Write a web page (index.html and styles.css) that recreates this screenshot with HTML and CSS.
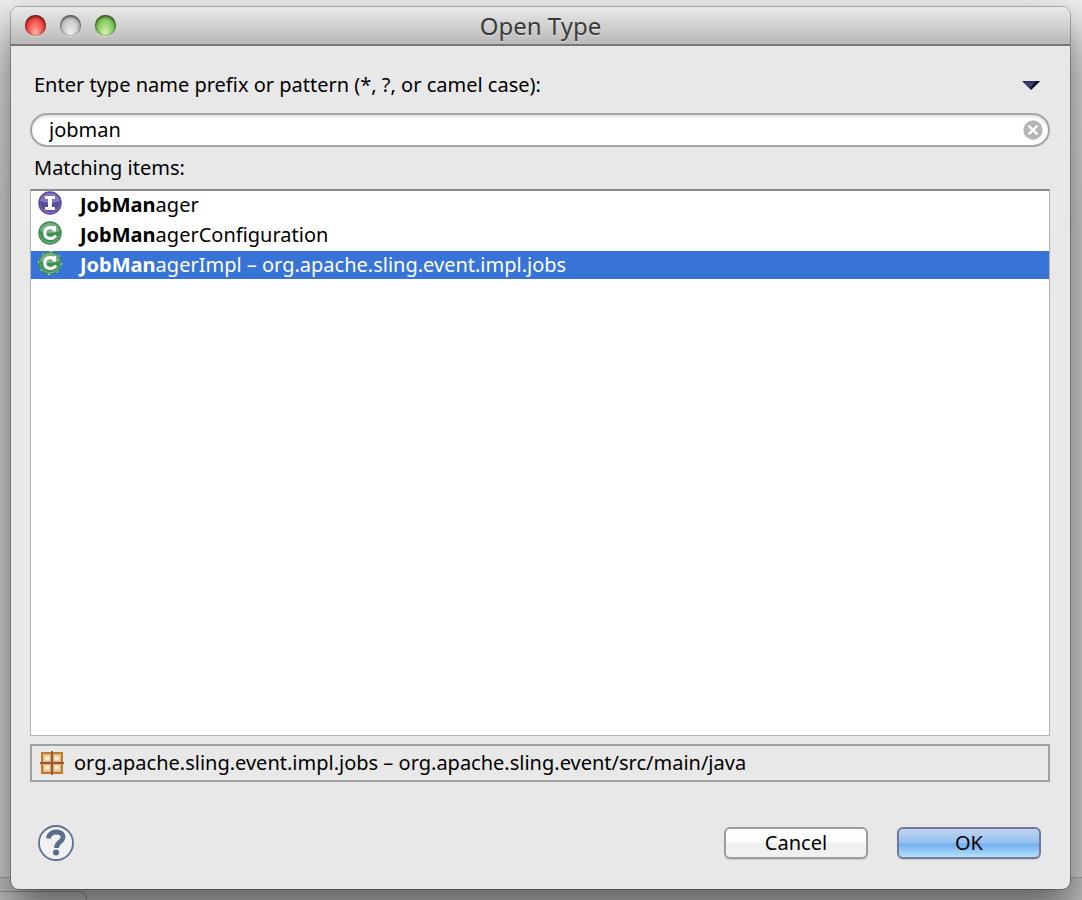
FILE: index.html
```html
<!DOCTYPE html>
<html lang="en">
<head>
    <meta charset="UTF-8">
    <meta name="viewport" content="width=device-width, initial-scale=1.0">
    <title>Open Type</title>
    <link rel="stylesheet" href="styles.css">
</head>
<body>
    <div class="backdrop"><div class="backdropTab"></div></div>

    <form class="window">
        <header class="titleBar">
            <div class="lights">
                <button type="button" class="light red" aria-label="Close"></button>
                <button type="button" class="light gray" aria-label="Minimize"></button>
                <button type="button" class="light green" aria-label="Zoom"></button>
            </div>
            <h1 class="title">Open Type</h1>
        </header>

        <main class="content">
            <div class="promptRow">
                <label for="pattern">Enter type name prefix or pattern (*, ?, or camel case):</label>
                <button type="button" class="menuButton" aria-label="View menu">
                    <svg width="18" height="9" viewBox="0 0 18 9">
                        <path d="M0 0H18L9 9Z" fill="#2b2a72"/>
                        <path d="M3 2H12L9 6Z" fill="#4a4560"/>
                        <path d="M14 0H18L9 9V6Z" fill="#15131c"/>
                    </svg>
                </button>
            </div>

            <div class="searchField">
                <input type="text" id="pattern" value="jobman">
                <button type="button" class="clearButton" aria-label="Clear">
                    <svg width="20" height="20" viewBox="0 0 20 20">
                        <circle cx="10" cy="10" r="9.7" fill="#b5b5b5"/>
                        <path d="M6.3 6.3L13.7 13.7M13.7 6.3L6.3 13.7" stroke="#fff" stroke-width="2.4" stroke-linecap="round"/>
                    </svg>
                </button>
            </div>

            <h2 class="listLabel" id="listLabel">Matching items:</h2>

            <ul class="list" role="listbox" aria-labelledby="listLabel">
                <li class="item" role="option" aria-selected="false">
                    <svg class="itemIcon" width="24" height="24" viewBox="0 0 24 24">
                        <circle cx="12" cy="12" r="11" fill="#8577bd" stroke="#5d4b9c" stroke-width="1.5"/>
                        <path d="M2 10Q12 14 22 10A10 10 0 0 1 2 12Z" fill="#5c4a9f"/>
                        <path d="M7 5H17V8H14V16H17V19H7V16H10V8H7Z" fill="#fff"/>
                    </svg>
                    <span><b>JobMan</b>ager</span>
                </li>
                <li class="item" role="option" aria-selected="false">
                    <svg class="itemIcon" width="24" height="24" viewBox="0 0 24 24">
                        <circle cx="12" cy="12" r="11" fill="#74b183" stroke="#3f8a58" stroke-width="1.5"/>
                        <path d="M2 10Q12 14 22 10A10 10 0 0 1 2 12Z" fill="#3d9050"/>
                        <path d="M17 9.500C16 5.500 6.800 5 6.800 12S15.500 18.500 18 14.500" fill="none" stroke="#fff" stroke-width="3.200"/>
                        <path d="M15.500 5H18V10.500H14.500Z" fill="#fff"/>
                    </svg>
                    <span><b>JobMan</b>agerConfiguration</span>
                </li>
                <li class="item selected" role="option" aria-selected="true">
                    <svg class="itemIcon" width="24" height="24" viewBox="0 0 24 24">
                        <circle cx="12" cy="12" r="11" fill="#74b183" stroke="#3f8a58" stroke-width="1.5"/>
                        <circle cx="12" cy="12" r="11.5" fill="none" stroke="#d5e6e0" stroke-width="1" stroke-dasharray="2 7"/>
                        <path d="M2 10Q12 14 22 10A10 10 0 0 1 2 12Z" fill="#3d9050"/>
                        <path d="M17 9.500C16 5.500 6.800 5 6.800 12S15.500 18.500 18 14.500" fill="none" stroke="#fff" stroke-width="3.200"/>
                        <path d="M15.500 5H18V10.500H14.500Z" fill="#fff"/>
                    </svg>
                    <span><b>JobMan</b>agerImpl – org.apache.sling.event.impl.jobs</span>
                </li>
            </ul>

            <div class="status">
                <svg width="24" height="24" viewBox="0 0 24 24">
                    <rect x="2" y="2" width="20" height="20" fill="#dfb078" stroke="#c47a30" stroke-width="2"/>
                    <path d="M4 4H10V10H4ZM14 4H20V10H14ZM4 14H10V20H4ZM14 14H20V20H14Z" fill="#f0d5a8"/>
                    <path d="M6 6H9V9H6ZM15 6H18V9H15ZM6 15H9V18H6ZM15 15H18V18H15Z" fill="#fbeecb"/>
                    <path d="M12 0V24M0 12H24" stroke="#96583c" stroke-width="2"/>
                </svg>
                <span>org.apache.sling.event.impl.jobs – org.apache.sling.event/src/main/java</span>
            </div>
        </main>

        <footer class="buttons">
            <button type="button" class="help" aria-label="Help">
                <svg width="38" height="38" viewBox="0 0 38 38">
                    <circle cx="19" cy="19" r="17" fill="#f0f0f0" stroke="#5f7290" stroke-width="1.800"/>
                    <path d="M11.500 14.500C12 6 26.500 6 26 13.500C25.500 18.500 19.500 17.500 19.500 24" fill="none" stroke="#5a6d8d" stroke-width="4.800"/>
                    <circle cx="19" cy="28.500" r="3" fill="#5a6d8d"/>
                </svg>
            </button>
            <button type="button" class="button">Cancel</button>
            <button type="submit" class="button primary">OK</button>
        </footer>
    </form>
</body>
</html>
```
FILE: styles.css
```css
* {
    box-sizing: border-box;
}

body {
    margin: 0;
    min-height: 100vh;
    padding: 7px 12px 11px 11px;
    display: flex;
    background: linear-gradient(#ededed, #d4d4d4 80px, #cacaca 240px);
    font-family: "Noto Sans", "Lucida Grande", sans-serif;
    font-size: 20px;
    line-height: 30px;
    color: #000;
    overflow: hidden;
}

button {
    padding: 0;
    border: 0;
    background: none;
    font: inherit;
    color: inherit;
}

svg {
    display: block;
}

/* edge of the window that lies behind the dialog */
.backdrop {
    position: absolute;
    left: 0;
    right: 0;
    bottom: 0;
    height: 23px;
    border-top: 1px solid #a0a0a0;
    background: #bcbcbc;
}

.backdropTab {
    position: absolute;
    left: 0;
    bottom: 0;
    width: 87px;
    height: 9px;
    border: 1px solid #8b8f99;
    border-width: 1px 1px 0 0;
    border-radius: 0 8px 0 0;
}

.window {
    position: relative;
    flex: 1;
    display: flex;
    flex-direction: column;
    background: #e8e8e8;
    border-radius: 8px;
    box-shadow: 0 0 0 1px rgba(0, 0, 0, 0.25), 0 20px 40px rgba(0, 0, 0, 0.5);
}

.titleBar {
    display: grid;
    grid-template-columns: 1fr auto 1fr;
    align-items: center;
    height: 39px;
    padding: 0 14px;
    border-bottom: 2px solid #757575;
    border-radius: 8px 8px 0 0;
    background: linear-gradient(#e9e9e9, #b9b9b9);
}

.lights {
    display: flex;
    gap: 14px;
}

.light {
    width: 21px;
    height: 21px;
    border-radius: 50%;
    box-shadow: inset 0 2px 3px rgba(0, 0, 0, 0.5), inset 0 0 2px rgba(0, 0, 0, 0.6), 0 1px 0 rgba(255, 255, 255, 0.5);
}

.red {
    background: radial-gradient(ellipse at 50% 90%, #ffb9ac, #f0403b 60%, #c9302d);
}

.gray {
    background: radial-gradient(ellipse at 50% 90%, #f2f2f2, #c4c4c4 60%, #a8a8a8);
}

.green {
    background: radial-gradient(ellipse at 50% 90%, #dcf7b4, #7cc557 60%, #4d9c36);
}

.title {
    margin: 0;
    font-size: 24px;
    font-weight: 400;
    color: #3a3a3a;
    text-shadow: 0 1px 0 rgba(255, 255, 255, 0.5);
}

.content {
    flex: 1;
    display: flex;
    flex-direction: column;
    padding: 24px 20px 0 19px;
}

.promptRow {
    display: flex;
    justify-content: space-between;
    align-items: center;
    padding: 0 10px 0 4px;
}

.searchField {
    display: flex;
    align-items: center;
    height: 34px;
    margin-top: 13px;
    padding: 0 5px 0 17px;
    border: 2px solid #a5a5a5;
    border-radius: 17px;
    background: #fff;
    box-shadow: inset 0 2px 2px rgba(0, 0, 0, 0.12);
}

.searchField input {
    flex: 1;
    min-width: 0;
    padding: 0;
    border: 0;
    outline: 0;
    background: none;
    font: inherit;
    color: inherit;
}

.listLabel {
    margin: 6px 4px;
    font-size: 20px;
    font-weight: 400;
}

.list {
    flex: 1;
    display: flex;
    flex-direction: column;
    gap: 2px;
    margin: 0;
    padding: 0;
    list-style: none;
    border: 1px solid #b4b4b4;
    border-top: 2px solid #8a8a8a;
    background: #fff;
}

.item {
    display: flex;
    align-items: center;
    gap: 18px;
    height: 28px;
    padding: 0 7px;
    line-height: 28px;
    white-space: nowrap;
}

.itemIcon {
    align-self: flex-start;
}

.selected {
    background: #3874d8;
    color: #fff;
}

.status {
    display: flex;
    align-items: center;
    gap: 10px;
    height: 38px;
    margin-top: 8px;
    padding: 0 8px;
    border: 2px solid #a0a0a0;
    white-space: nowrap;
}

.buttons {
    display: flex;
    align-items: center;
    gap: 29px;
    padding: 42px 29px 27px 26px;
}

.help {
    margin-right: auto;
}

.button {
    width: 144px;
    height: 32px;
    border: 2px solid #9c9c9c;
    border-radius: 6px;
    background: linear-gradient(#fff, #fbfbfb 50%, #efefef 50%, #f1f1f1);
    line-height: 28px;
    box-shadow: 0 1px 1px rgba(0, 0, 0, 0.15);
}

.primary {
    border-color: #74799c;
    background: linear-gradient(#c0d6f4, #94bfee 50%, #71aeef 54%, #b5e2fa);
}
```
